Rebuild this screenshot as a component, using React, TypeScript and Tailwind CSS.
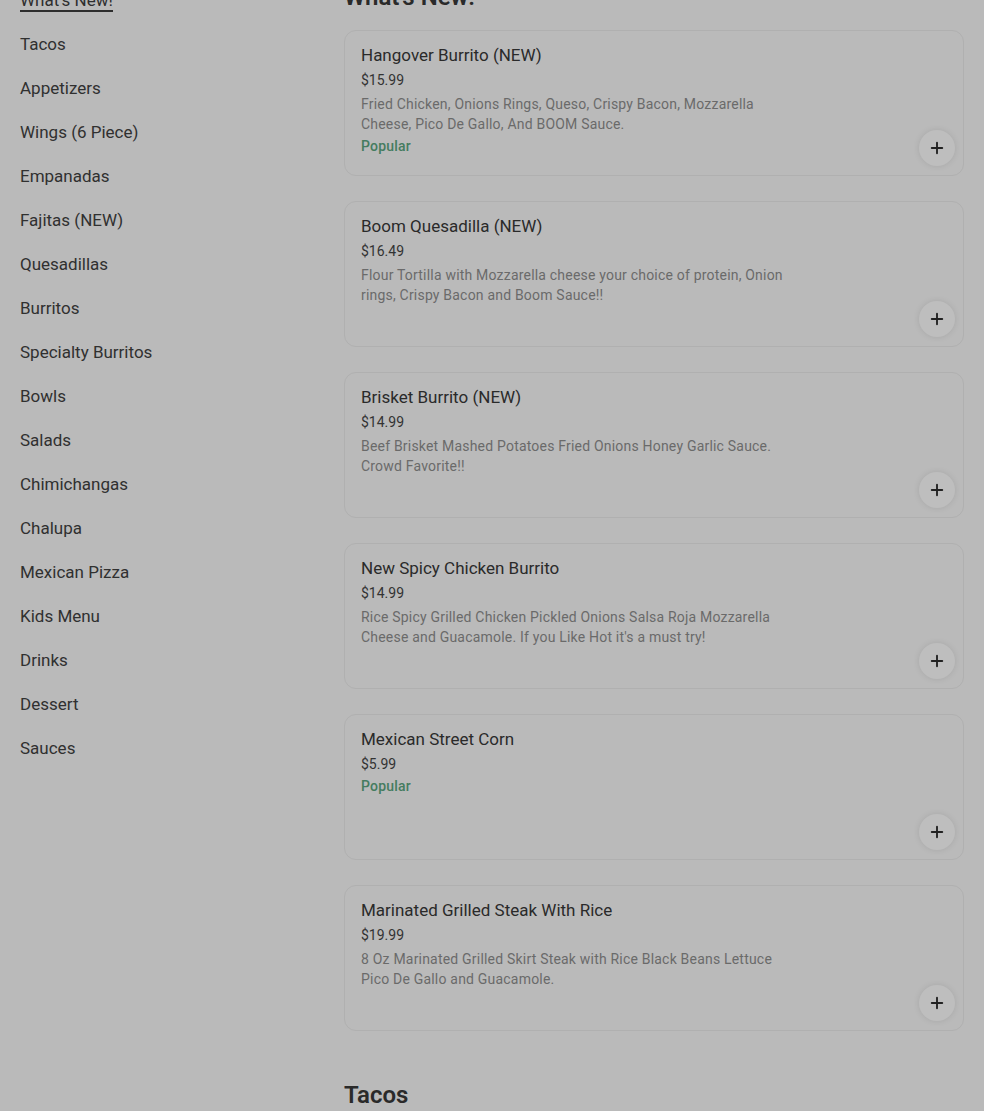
import { Plus } from "lucide-react";

const categories = [
  "Tacos",
  "Appetizers",
  "Wings (6 Piece)",
  "Empanadas",
  "Fajitas (NEW)",
  "Quesadillas",
  "Burritos",
  "Specialty Burritos",
  "Bowls",
  "Salads",
  "Chimichangas",
  "Chalupa",
  "Mexican Pizza",
  "Kids Menu",
  "Drinks",
  "Dessert",
  "Sauces",
];

interface Item {
  name: string;
  price: string;
  description?: string;
  popular?: boolean;
}

const items: Item[] = [
  {
    name: "Hangover Burrito (NEW)",
    price: "$15.99",
    description:
      "Fried Chicken, Onions Rings, Queso, Crispy Bacon, Mozzarella Cheese, Pico De Gallo, And BOOM Sauce.",
    popular: true,
  },
  {
    name: "Boom Quesadilla (NEW)",
    price: "$16.49",
    description:
      "Flour Tortilla with Mozzarella cheese your choice of protein, Onion rings, Crispy Bacon and Boom Sauce!!",
  },
  {
    name: "Brisket Burrito (NEW)",
    price: "$14.99",
    description:
      "Beef Brisket Mashed Potatoes Fried Onions Honey Garlic Sauce. Crowd Favorite!!",
  },
  {
    name: "New Spicy Chicken Burrito",
    price: "$14.99",
    description:
      "Rice Spicy Grilled Chicken Pickled Onions Salsa Roja Mozzarella Cheese and Guacamole. If you Like Hot it's a must try!",
  },
  {
    name: "Mexican Street Corn",
    price: "$5.99",
    popular: true,
  },
  {
    name: "Marinated Grilled Steak With Rice",
    price: "$19.99",
    description:
      "8 Oz Marinated Grilled Skirt Steak with Rice Black Beans Lettuce Pico De Gallo and Guacamole.",
  },
];

function MenuCard({ item }: { item: Item }) {
  return (
    <div className="relative mb-[25px] h-[146px] rounded-xl border border-[#b0b0b0] px-4 pt-3">
      <div className="text-[17px] leading-6 text-[#2a2a2a]">{item.name}</div>
      <div className="mt-[3px] text-[14px] leading-5 text-[#333]">
        {item.price}
      </div>
      {item.description && (
        <p className="mt-1 max-w-[432px] text-[14px] leading-5 tracking-[0.2px] text-[#6a6a6a]">
          {item.description}
        </p>
      )}
      {item.popular && (
        <div className="mt-[2px] text-[14px] leading-5 font-medium tracking-[0.2px] text-[#457c5f]">
          Popular
        </div>
      )}
      <button className="absolute right-2 bottom-[9px] flex h-9 w-9 items-center justify-center rounded-full bg-[#bebebe] text-[#222] shadow-[0_0_6px_rgba(0,0,0,0.1)]">
        <Plus size={18} strokeWidth={2.5} />
      </button>
    </div>
  );
}

export default function App() {
  return (
    <div
      className="min-h-[1111px] overflow-hidden bg-[#bababa]"
      style={{ fontFamily: "Roboto, 'Liberation Sans', sans-serif" }}
    >
      <div className="-mt-[23px] flex gap-6 px-5">
        <nav className="w-[300px] shrink-0 pt-px">
          <div className="py-3 text-[17px] leading-5 text-[#2e2e2e]">
            <span className="border-b-2 border-[#2e2e2e]">What's New!</span>
          </div>
          {categories.map((c) => (
            <div key={c} className="py-3 text-[17px] leading-5 text-[#303030]">
              {c}
            </div>
          ))}
        </nav>
        <main className="flex-1 pt-[4px]">
          <h2 className="mb-[17px] text-[24px] leading-8 font-semibold text-[#2a2a2a]">
            What's New!
          </h2>
          {items.map((it) => (
            <MenuCard key={it.name} item={it} />
          ))}
          <h2 className="mt-[48px] text-[24px] leading-8 font-semibold text-[#2a2a2a]">
            Tacos
          </h2>
        </main>
      </div>
    </div>
  );
}
